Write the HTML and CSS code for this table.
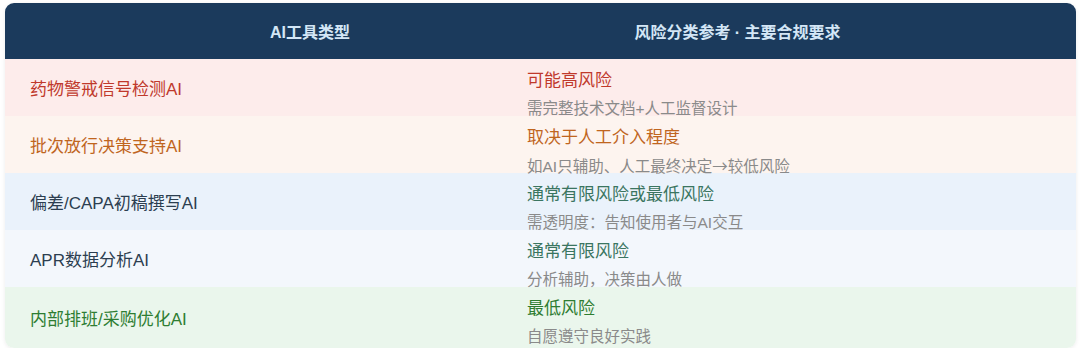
FILE: index.html
```html
<!DOCTYPE html>
<html lang="zh-CN">
<head>
<meta charset="utf-8">
<title>AI工具风险分类</title>
<link rel="stylesheet" href="styles.css">
</head>
<body>
<div class="page">
  <div class="table">
    <div class="row head">
      <div class="th th-left">AI工具类型</div>
      <div class="th th-right">风险分类参考 · 主要合规要求</div>
    </div>
    <div class="row r-red">
      <div class="name">药物警戒信号检测AI</div>
      <div class="risk"><div class="title">可能高风险</div><div class="sub">需完整技术文档+人工监督设计</div></div>
    </div>
    <div class="row r-orange">
      <div class="name">批次放行决策支持AI</div>
      <div class="risk"><div class="title">取决于人工介入程度</div><div class="sub">如AI只辅助、人工最终决定<span class="arrow">→</span>较低风险</div></div>
    </div>
    <div class="row r-blue">
      <div class="name">偏差/CAPA初稿撰写AI</div>
      <div class="risk"><div class="title">通常有限风险或最低风险</div><div class="sub">需透明度：告知使用者与AI交互</div></div>
    </div>
    <div class="row r-pale">
      <div class="name">APR数据分析AI</div>
      <div class="risk"><div class="title">通常有限风险</div><div class="sub">分析辅助，决策由人做</div></div>
    </div>
    <div class="row r-green">
      <div class="name">内部排班/采购优化AI</div>
      <div class="risk"><div class="title">最低风险</div><div class="sub">自愿遵守良好实践</div></div>
    </div>
  </div>
</div>
</body>
</html>
```

FILE: styles.css
```css
html, body {
  margin: 0;
  padding: 0;
  background: #ffffff;
  font-family: "Liberation Sans", "Noto Sans CJK SC", sans-serif;
}
.page {
  padding: 3px 4px 0 5px;
}
.table {
  width: 1071px;
  border-radius: 9px;
  overflow: hidden;
  box-shadow: 0 1px 4px rgba(0, 0, 0, 0.08);
}
.row {
  display: grid;
  grid-template-columns: 498px 1fr;
}
.head {
  background: #1b3a5c;
  height: 56px;
  align-items: center;
}
.th {
  color: #d3e6f6;
  font-weight: bold;
  font-size: 16px;
  text-align: center;
}
.th-left { padding-left: 112px; }
.th-right { padding-right: 104px; }
.name {
  display: flex;
  align-items: center;
  padding-left: 25px;
  font-size: 17px;
  height: 57px;
}
.risk {
  padding: 10px 24px 0;
  height: 57px;
  box-sizing: border-box;
}
.title {
  font-size: 17px;
  line-height: 24px;
}
.sub {
  margin-top: 7px;
  font-size: 15.5px;
  line-height: 17px;
  color: #8a8a8a;
}
.arrow {
  font-family: "Noto Sans CJK SC", sans-serif;
}
.r-red { background: #fdeceb; }
.r-red .name, .r-red .title { color: #c0392b; }
.r-orange { background: #fdf4ef; }
.r-orange .name, .r-orange .title { color: #c0651e; }
.r-blue { background: #eaf2fb; }
.r-blue .name { color: #2c3e50; }
.r-blue .title { color: #3a7560; }
.r-pale { background: #f3f7fc; }
.r-pale .name { color: #2c3e50; }
.r-pale .title { color: #3a7560; }
.r-green { background: #eaf6ec; }
.r-green .risk, .r-green .name { height: 61px; }
.r-green .name, .r-green .title { color: #2e7d32; }
```
